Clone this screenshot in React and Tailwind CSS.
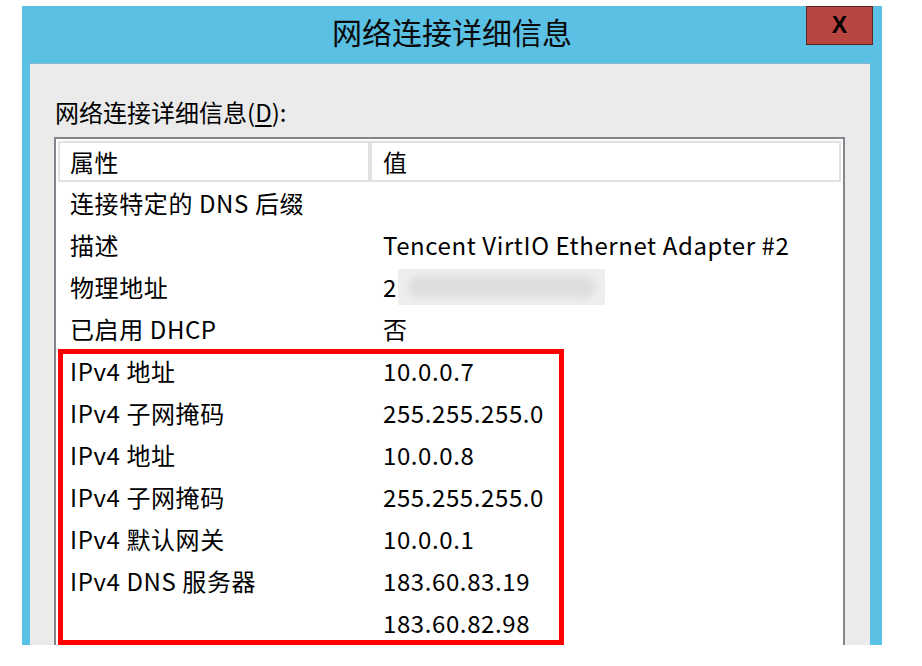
import React from "react";

const FONT = { fontFamily: '"Noto Sans CJK SC", "Noto Sans", sans-serif' };

const rows = [
  ["连接特定的 DNS 后缀", ""],
  ["描述", "Tencent VirtIO Ethernet Adapter #2"],
  ["物理地址", "MAC"],
  ["已启用 DHCP", "否"],
  ["IPv4 地址", "10.0.0.7"],
  ["IPv4 子网掩码", "255.255.255.0"],
  ["IPv4 地址", "10.0.0.8"],
  ["IPv4 子网掩码", "255.255.255.0"],
  ["IPv4 默认网关", "10.0.0.1"],
  ["IPv4 DNS 服务器", "183.60.83.19"],
  ["", "183.60.82.98"],
];

export default function App() {
  return (
    <div
      className="relative w-[922px] h-[666px] bg-white overflow-hidden text-black"
      style={FONT}
    >
      <div className="ml-[22px] mt-[6px] w-[860px] h-[639px] bg-[#5ac0e4] flex flex-col overflow-hidden">
        {/* title bar */}
        <div className="h-[57px] grid grid-cols-[1fr_auto_1fr] items-start shrink-0">
          <div />
          <div className="pt-[8px] text-[30px] leading-[34px] text-[#0a0a0a]">
            网络连接详细信息
          </div>
          <div className="flex justify-end pr-[9px]">
            <div className="w-[67px] h-[39px] bg-[#b8453f] border border-[#5c2522] flex items-center justify-center">
              <span
                className="text-[23px] font-bold leading-none text-black"
                style={{ fontFamily: '"Liberation Sans", Arial, sans-serif' }}
              >
                X
              </span>
            </div>
          </div>
        </div>
        {/* content */}
        <div className="ml-[8px] mr-[12px] flex-1 bg-[#ebebeb] border-t border-[#8cb8cc] pl-[24px] pr-[25px] pt-[34px] flex flex-col">
          <div className="pl-[1px] text-[24px] leading-[28px] h-[39px]">
            网络连接详细信息(<span className="underline underline-offset-[3px]">D</span>):
          </div>
          <div className="flex-1 bg-white border-2 border-[#82878d] border-b-0 p-[2px] pb-0 text-[24px] tracking-[0.6px]">
            {/* header */}
            <div className="flex h-[41px]">
              <div className="w-[312px] border-2 border-[#e1e1e1] pl-[10px] flex items-center leading-none">
                属性
              </div>
              <div className="flex-1 border-2 border-[#e1e1e1] pl-[11px] flex items-center leading-none">
                值
              </div>
            </div>
            {rows.map(([k, v], i) => (
              <div key={i} className="flex h-[42px] items-center leading-none">
                <div className="w-[312px] pl-[12px] whitespace-nowrap">{k}</div>
                <div className="flex-1 pl-[13px] whitespace-nowrap">
                  {v === "MAC" ? (
                    <div className="flex items-center">
                      <span>2</span>
                      <div className="ml-[1px] w-[207px] h-[36px] bg-[#eeeeee] flex items-center px-[10px]">
                        <div className="w-full h-[22px] rounded-full bg-[#dedede] blur-[3px]" />
                      </div>
                    </div>
                  ) : (
                    v
                  )}
                </div>
              </div>
            ))}
          </div>
        </div>
      </div>
      {/* red annotation box */}
      <div className="absolute left-[58px] top-[349px] w-[506px] h-[296px] border-[5px] border-[#ff0000]" />
    </div>
  );
}
